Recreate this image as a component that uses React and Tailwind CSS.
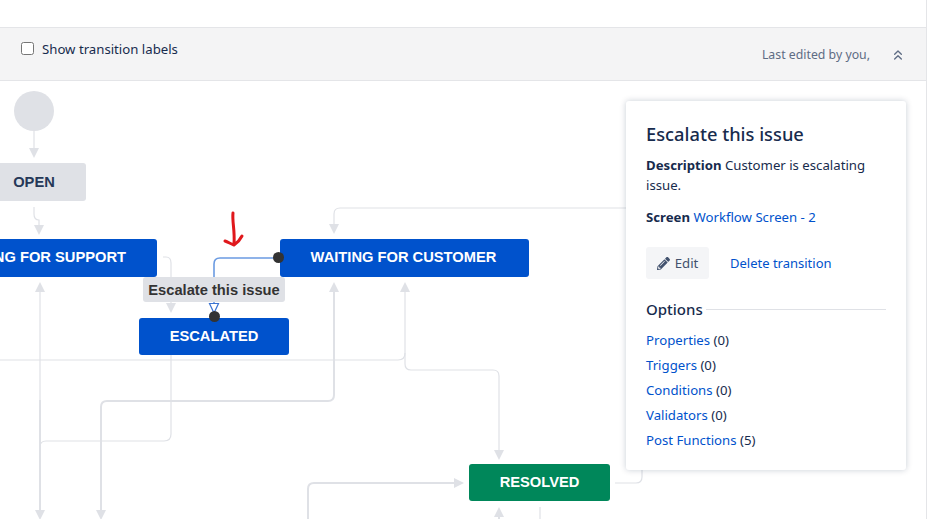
import { FaPencilAlt } from "react-icons/fa";
import { ChevronsUp } from "lucide-react";

const uiFont = "font-['Noto_Sans','Open_Sans',sans-serif]";
const nodeFont = "font-['Liberation_Sans',Arial,sans-serif]";

// Thin connectors between the workflow statuses
const thinEdges = [
  "M34 131V150",
  "M34 207V214Q34 220 39 220V226",
  "M163 257H166Q171 257 171 263V304",
  "M0 360H398Q405 360 405 353V290",
  "M405 353V364Q405 370 411 370H493Q499 370 499 376V452",
  "M171 355V434Q171 441 164 441H46Q40 441 40 447V512",
  "M40 290V512",
  "M334 226V214Q334 208 340 208H626",
  "M540 507V519",
  "M615 483H636Q642 483 642 477V470",
];

// Thicker connectors
const thickEdges = [
  "M40 400V512",
  "M101 512V407Q101 401 107 401H328Q334 401 334 395V290",
  "M308 519V489Q308 483 314 483H456",
  "M499 515V519",
];

const arrows = [
  "M29 148H39L34 158Z",
  "M34 225H44L39 235Z",
  "M166 303H176L171 313Z",
  "M35 292H45L40 282Z",
  "M329 224H339L334 234Z",
  "M329 292H339L334 282Z",
  "M400 292H410L405 282Z",
  "M494 450H504L499 460Z",
  "M454 478V488L464 483Z",
  "M494 517H504L499 507Z",
  "M35 510H45L40 520Z",
  "M96 510H106L101 520Z",
];

const StatusNode = ({ label, className }) => (
  <div
    className={`absolute flex items-center justify-center rounded-[3px] text-[14.7px] font-bold text-white ${nodeFont} ${className}`}
  >
    {label}
  </div>
);

const OptionLink = ({ name, count }) => (
  <li className="h-[25px] leading-[25px] text-[#172b4d]">
    <a href="#" className="text-[#0052cc]">
      {name}
    </a>{" "}
    ({count})
  </li>
);

const App = () => {
  return (
    <div className={`h-[519px] w-[937px] overflow-hidden bg-white ${uiFont}`}>
      <div className="flex h-[519px] w-[927px] flex-col border-r border-[#e4e5e8]">
        <div className="h-[27px] shrink-0" />

        {/* Toolbar */}
        <div className="flex h-[54px] shrink-0 justify-between border-y border-[#e4e5e8] bg-[#f4f4f5] pl-[21px] pr-[20px]">
          <label className="flex h-[40px] items-center text-[13.2px] text-[#172b4d]">
            <input type="checkbox" className="m-0 h-[13px] w-[13px]" />
            <span className="ml-[8px] mt-[3px]">Show transition labels</span>
          </label>
          <div className="flex items-center pt-[2px] text-[12.3px] text-[#5e6c84]">
            <span>Last edited by you,</span>
            <ChevronsUp className="ml-[20px] h-[16px] w-[16px]" strokeWidth={2} />
          </div>
        </div>

        {/* Workflow canvas */}
        <div className="relative flex-1 overflow-hidden">
          <svg
            className="absolute left-0 top-0"
            width="927"
            height="438"
            viewBox="0 81 927 438"
            fill="none"
          >
            <circle cx="34" cy="111" r="20" fill="#dfe1e6" />
            {thinEdges.map((d) => (
              <path key={d} d={d} stroke="#dfe1e6" strokeWidth="1.2" />
            ))}
            {thickEdges.map((d) => (
              <path key={d} d={d} stroke="#dfe1e6" strokeWidth="2" />
            ))}
            {arrows.map((d) => (
              <path key={d} d={d} fill="#dfe1e6" />
            ))}
            <path
              d="M278 258H220Q214 258 214 264V303"
              stroke="#6b9be2"
              strokeWidth="1.6"
            />
            <path d="M209.5 303.5H218.5L214 313Z" fill="#fff" stroke="#3b73d1" strokeWidth="1.2" />
          </svg>

          <StatusNode label="OPEN" className="left-[-18px] top-[82px] h-[38px] w-[104px] bg-[#dfe1e6] !text-[#253858]" />
          <StatusNode label="WAITING FOR SUPPORT" className="left-[-78px] top-[158px] h-[38px] w-[235px] bg-[#0052cc] pb-px" />
          <StatusNode label="WAITING FOR CUSTOMER" className="left-[280px] top-[158px] h-[38px] w-[249px] bg-[#0052cc] pb-px pr-[2px]" />
          <StatusNode label="ESCALATED" className="left-[139px] top-[237px] h-[37px] w-[150px] bg-[#0052cc]" />
          <StatusNode label="RESOLVED" className="left-[469px] top-[383px] h-[37px] w-[141px] bg-[#00875a]" />

          {/* Selected transition label and handles */}
          <div
            className={`absolute left-[143px] top-[196px] flex h-[25px] w-[142px] items-center justify-center rounded-[3px] bg-[#dfe1e6] pt-px text-[14.7px] font-bold text-[#333333] ${nodeFont}`}
          >
            Escalate this issue
          </div>
          <div className="absolute left-[273px] top-[171px] h-[11px] w-[11px] rounded-full bg-[#333333]" />
          <div className="absolute left-[208.5px] top-[230px] h-[11px] w-[11px] rounded-full bg-[#333333]" />

          {/* Red annotation */}
          <svg className="absolute left-[220px] top-[128px]" width="28" height="40" viewBox="0 0 28 40" fill="none">
            <path
              d="M13 4C12 12 15 22 14 34M5 32C8 33 11 35 14 36C17 34 20 31 22 27"
              stroke="#e0181c"
              strokeWidth="3"
              strokeLinecap="round"
              strokeLinejoin="round"
            />
          </svg>

          {/* Transition details panel */}
          <aside className="absolute left-[626px] top-[20px] h-[369px] w-[280px] rounded-[3px] bg-white px-[20px] pt-[20px] text-[13.2px] text-[#172b4d] shadow-[0_0_6px_rgba(9,30,66,0.22)]">
            <h2 className="text-[18.3px] font-medium leading-[26px]">Escalate this issue</h2>
            <p className="mt-[8px] leading-[20px]">
              <strong className="font-bold">Description</strong> Customer is escalating issue.
            </p>
            <p className="mt-[12px] leading-[20px]">
              <strong className="font-bold">Screen</strong>{" "}
              <a href="#" className="text-[#0052cc]">
                Workflow Screen - 2
              </a>
            </p>
            <div className="mt-[20px] flex items-center">
              <button className="flex h-[32px] w-[63px] items-center justify-center gap-[5px] rounded-[3px] bg-[#f4f5f7] pt-px text-[#42526e]">
                <FaPencilAlt className="h-[13px] w-[13px]" />
                Edit
              </button>
              <a href="#" className="ml-[21px] pt-[2px] text-[13px] text-[#0052cc]">
                Delete transition
              </a>
            </div>
            <div className="mt-[18px] flex items-center">
              <h3 className="text-[15px] font-medium leading-[24px]">Options</h3>
              <div className="ml-[3px] h-px flex-1 bg-[#dfe1e6]" />
            </div>
            <ul className="mt-[7px]">
              <OptionLink name="Properties" count={0} />
              <OptionLink name="Triggers" count={0} />
              <OptionLink name="Conditions" count={0} />
              <OptionLink name="Validators" count={0} />
              <OptionLink name="Post Functions" count={5} />
            </ul>
          </aside>
        </div>
      </div>
    </div>
  );
};

export default App;
